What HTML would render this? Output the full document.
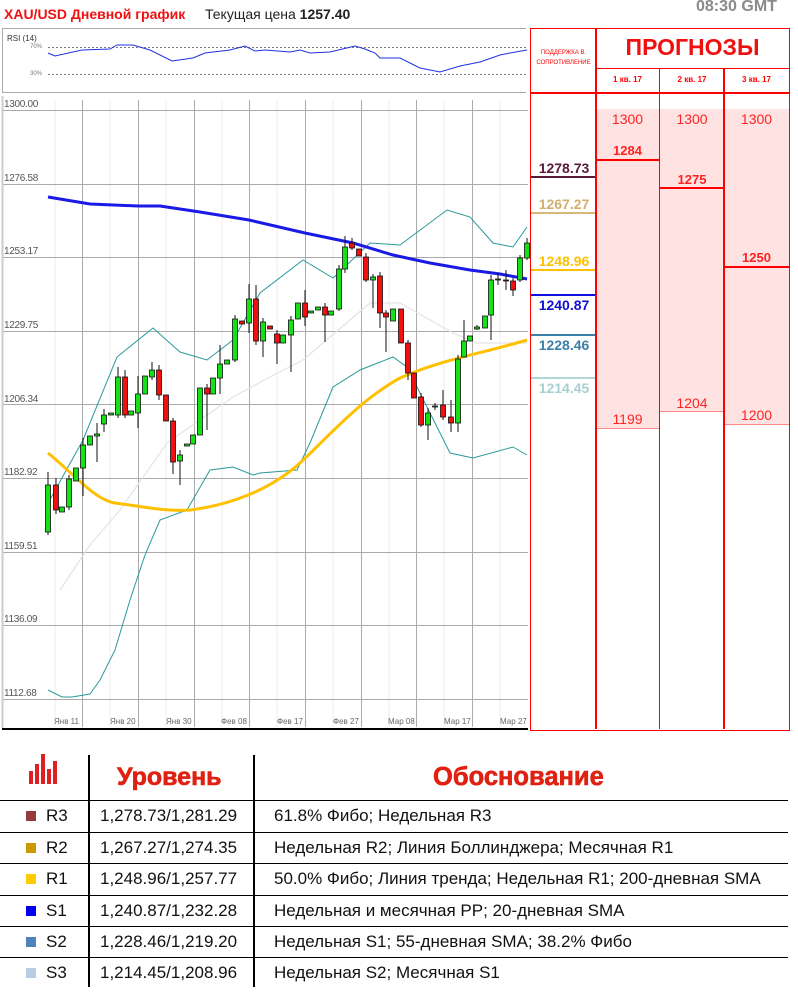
<!DOCTYPE html>
<html><head><meta charset="utf-8"><style>
body{margin:0;width:798px;height:997px;background:#fff;position:relative;overflow:hidden;font-family:"Liberation Sans",Arial,sans-serif}
.a{position:absolute}
.pl{position:absolute;left:4px;font-size:10px;color:#555;letter-spacing:-0.3px}
.dl{position:absolute;top:717px;font-size:8px;color:#666}
.lv{position:absolute;left:533px;width:62px;text-align:center;font-size:14px;font-weight:bold}
.fc{position:absolute;font-size:14px;color:#f22;text-align:center}
.row{position:absolute;left:0;width:788px;height:31px;border-top:1.5px solid #000;font-size:17px;color:#111}
.row span{position:absolute;top:5px}
.sq{position:absolute;left:26px;top:10px;width:10px;height:10px}
</style></head><body>
<div class="a" style="left:4px;top:6px;font-size:14px;font-weight:bold;color:#f01010">XAU/USD Дневной график</div>
<div class="a" style="left:205px;top:6px;font-size:14px;color:#222">Текущая цена <b>1257.40</b></div>
<div class="a" style="left:696px;top:-2px;font-size:16px;font-weight:bold;color:#8a8a8a">08:30 GMT</div>

<div class="a" style="left:2px;top:28px;width:523px;height:63px;border:1px solid #aaa;border-right:none"></div>
<div class="a" style="left:7px;top:34px;font-size:8px;color:#333">RSI (14)</div>
<div class="a" style="left:30px;top:44px;font-size:6px;color:#777">70%</div>
<div class="a" style="left:30px;top:71px;font-size:6px;color:#777">30%</div>
<svg class="a" style="left:0;top:0" width="530" height="95">
<line x1="48" y1="47.5" x2="526" y2="47.5" stroke="#777" stroke-dasharray="2,2"/>
<line x1="48" y1="74.5" x2="526" y2="74.5" stroke="#777" stroke-dasharray="2,2"/>
<polyline fill="none" stroke="#2030e0" stroke-width="1" points="48,53 55,56 82,50 110,49 117,45 133,45 150,50 172,61 193,58 205,53 230,50 245,46 255,51 265,50 290,52 300,50 310,53 330,52 355,46 365,49 375,53 380,58 400,58 420,68 440,72 460,66 480,62 500,55 510,53 527,50"/>
</svg>

<svg class="a" style="left:0;top:96px" width="530" height="640" viewBox="0 96 530 640">
<g stroke="#eee" stroke-width="1">
<line x1="55" y1="100" x2="55" y2="727"/><line x1="110" y1="100" x2="110" y2="727"/><line x1="166" y1="100" x2="166" y2="727"/><line x1="222" y1="100" x2="222" y2="727"/><line x1="277" y1="100" x2="277" y2="727"/><line x1="333" y1="100" x2="333" y2="727"/><line x1="389" y1="100" x2="389" y2="727"/><line x1="444" y1="100" x2="444" y2="727"/><line x1="500" y1="100" x2="500" y2="727"/>
</g>
<g stroke="#aaa" stroke-width="1">
<line x1="82.5" y1="100" x2="82.5" y2="727"/><line x1="138.5" y1="100" x2="138.5" y2="727"/><line x1="194.5" y1="100" x2="194.5" y2="727"/><line x1="249.5" y1="100" x2="249.5" y2="727"/><line x1="305.5" y1="100" x2="305.5" y2="727"/><line x1="361.5" y1="100" x2="361.5" y2="727"/><line x1="416.5" y1="100" x2="416.5" y2="727"/><line x1="472.5" y1="100" x2="472.5" y2="727"/>
<line x1="2" y1="110.5" x2="528" y2="110.5"/><line x1="2" y1="184.5" x2="528" y2="184.5"/><line x1="2" y1="257.5" x2="528" y2="257.5"/><line x1="2" y1="331.5" x2="528" y2="331.5"/><line x1="2" y1="404.5" x2="528" y2="404.5"/><line x1="2" y1="478.5" x2="528" y2="478.5"/><line x1="2" y1="552.5" x2="528" y2="552.5"/><line x1="2" y1="625.5" x2="528" y2="625.5"/><line x1="2" y1="699.5" x2="528" y2="699.5"/>
</g>
<line x1="2.5" y1="96" x2="2.5" y2="728" stroke="#ccc" stroke-width="2"/>
<line x1="2" y1="729" x2="528" y2="729" stroke="#000" stroke-width="2"/>
<polyline fill="none" stroke="#e4e4e4" stroke-width="1.2" points="60,590 90,545 120,510 167,443 200,420 233,397 270,377 303,360 370,303 400,303 453,333 477,343 527,343"/>
<polyline fill="none" stroke="#2a9a9a" stroke-width="1" points="47,505 83,440 117,357 153,328 180,352 207,360 233,340 260,293 303,260 333,278 370,243 400,245 447,210 470,217 493,243 513,247 527,227"/>
<polyline fill="none" stroke="#2a9a9a" stroke-width="1" points="48,690 62,697 72,697 90,694 100,680 115,650 130,600 145,555 160,520 187,510 210,470 233,467 253,475 260,473 297,470 310,443 333,387 360,370 393,357 407,367 450,453 473,458 513,447 527,455"/>
<path fill="none" stroke="#ffc000" stroke-width="3" d="M48,453 C75,475 95,500 115,503 C140,506 165,512 190,510 C230,505 270,490 300,463 C330,435 360,400 400,378 C440,360 480,354 527,340"/>
<polyline fill="none" stroke="#1a1ae6" stroke-width="3" points="48,197 90,204 138,206 160,206 200,212 249,220 305,233 353,243 393,255 430,263 470,270 500,274 527,279"/>
<g stroke="#111" stroke-width="1">
<line x1="48" y1="472" x2="48" y2="535"/><line x1="56" y1="478" x2="56" y2="514"/><line x1="69" y1="475" x2="69" y2="510"/><line x1="83" y1="438" x2="83" y2="496"/><line x1="97" y1="423" x2="97" y2="462"/><line x1="104" y1="409" x2="104" y2="432"/><line x1="118" y1="367" x2="118" y2="418"/><line x1="125" y1="370" x2="125" y2="418"/><line x1="138" y1="376" x2="138" y2="428"/><line x1="152" y1="362" x2="152" y2="380"/><line x1="159" y1="365" x2="159" y2="400"/><line x1="173" y1="418" x2="173" y2="474"/><line x1="180" y1="450" x2="180" y2="485"/><line x1="207" y1="384" x2="207" y2="430"/><line x1="220" y1="345" x2="220" y2="394"/><line x1="235" y1="315" x2="235" y2="362"/><line x1="249" y1="284" x2="249" y2="333"/><line x1="256" y1="285" x2="256" y2="345"/><line x1="263" y1="318" x2="263" y2="357"/><line x1="277" y1="330" x2="277" y2="364"/><line x1="291" y1="316" x2="291" y2="372"/><line x1="305" y1="290" x2="305" y2="326"/><line x1="325" y1="303" x2="325" y2="342"/><line x1="339" y1="265" x2="339" y2="311"/><line x1="345" y1="236" x2="345" y2="273"/><line x1="352" y1="238" x2="352" y2="250"/><line x1="366" y1="253" x2="366" y2="282"/><line x1="373" y1="274" x2="373" y2="308"/><line x1="380" y1="272" x2="380" y2="328"/><line x1="386" y1="310" x2="386" y2="352"/><line x1="408" y1="340" x2="408" y2="380"/><line x1="421" y1="393" x2="421" y2="427"/><line x1="428" y1="408" x2="428" y2="440"/><line x1="435" y1="403" x2="435" y2="410"/><line x1="443" y1="390" x2="443" y2="420"/><line x1="451" y1="400" x2="451" y2="432"/><line x1="458" y1="355" x2="458" y2="432"/><line x1="464" y1="320" x2="464" y2="357"/><line x1="477" y1="325" x2="477" y2="330"/><line x1="491" y1="275" x2="491" y2="340"/><line x1="498" y1="273" x2="498" y2="285"/><line x1="506" y1="270" x2="506" y2="290"/><line x1="513" y1="278" x2="513" y2="296"/><line x1="520" y1="255" x2="520" y2="282"/><line x1="527" y1="238" x2="527" y2="260"/>
</g>
<g stroke="#111" stroke-width="0.8">
<g fill="#16e016">
<rect x="45.5" y="485" width="5" height="47"/><rect x="59.5" y="507" width="5" height="5"/><rect x="66.5" y="479" width="5" height="28"/><rect x="73.5" y="468" width="5" height="13"/><rect x="80.5" y="445" width="5" height="23"/><rect x="87.5" y="436" width="5" height="9"/><rect x="94.5" y="434" width="5" height="2"/><rect x="101.5" y="415" width="5" height="9"/><rect x="108.5" y="413" width="5" height="2"/><rect x="115.5" y="377" width="5" height="38"/><rect x="128.5" y="411" width="5" height="4"/><rect x="135.5" y="394" width="5" height="19"/><rect x="142.5" y="376" width="5" height="18"/><rect x="149.5" y="370" width="5" height="7"/><rect x="177.5" y="455" width="5" height="6"/><rect x="184.5" y="444" width="5" height="2"/><rect x="190.5" y="435" width="5" height="9"/><rect x="197.5" y="388" width="5" height="47"/><rect x="210.5" y="378" width="5" height="16"/><rect x="217.5" y="364" width="5" height="14"/><rect x="224.5" y="360" width="5" height="4"/><rect x="232.5" y="319" width="5" height="41"/><rect x="246.5" y="299" width="5" height="24"/><rect x="260.5" y="322" width="5" height="19"/><rect x="280.5" y="335" width="5" height="8"/><rect x="288.5" y="320" width="5" height="15"/><rect x="295.5" y="303" width="5" height="16"/><rect x="308.5" y="311" width="5" height="2"/><rect x="315.5" y="307" width="5" height="3"/><rect x="328.5" y="311" width="5" height="4"/><rect x="336.5" y="269" width="5" height="40"/><rect x="342.5" y="247" width="5" height="22"/><rect x="370.5" y="277" width="5" height="3"/><rect x="390.5" y="309" width="5" height="12"/><rect x="425.5" y="413" width="5" height="12"/><rect x="432.5" y="406" width="5" height="1"/><rect x="455.5" y="359" width="5" height="64"/><rect x="461.5" y="341" width="5" height="16"/><rect x="467.5" y="336" width="5" height="5"/><rect x="474.5" y="327" width="5" height="2"/><rect x="482.5" y="316" width="5" height="12"/><rect x="488.5" y="280" width="5" height="35"/><rect x="495.5" y="279" width="5" height="1"/><rect x="517.5" y="258" width="5" height="22"/><rect x="524.5" y="243" width="5" height="15"/>
</g>
<g fill="#f01010">
<rect x="53.5" y="485" width="5" height="25"/><rect x="122.5" y="377" width="5" height="38"/><rect x="156.5" y="370" width="5" height="25"/><rect x="163.5" y="395" width="5" height="26"/><rect x="170.5" y="421" width="5" height="41"/><rect x="204.5" y="388" width="5" height="6"/><rect x="239.5" y="321" width="5" height="3"/><rect x="253.5" y="299" width="5" height="42"/><rect x="267.5" y="326" width="5" height="3"/><rect x="274.5" y="334" width="5" height="9"/><rect x="302.5" y="303" width="5" height="14"/><rect x="322.5" y="307" width="5" height="8"/><rect x="349.5" y="243" width="5" height="5"/><rect x="356.5" y="249" width="5" height="7"/><rect x="363.5" y="257" width="5" height="23"/><rect x="377.5" y="276" width="5" height="37"/><rect x="383.5" y="313" width="5" height="4"/><rect x="398.5" y="309" width="5" height="34"/><rect x="405.5" y="343" width="5" height="30"/><rect x="411.5" y="373" width="5" height="25"/><rect x="418.5" y="397" width="5" height="28"/><rect x="440.5" y="405" width="5" height="12"/><rect x="448.5" y="417" width="5" height="6"/><rect x="503.5" y="280" width="5" height="1"/><rect x="510.5" y="281" width="5" height="9"/>
</g></g>
</svg>
<div class="pl" style="top:99px">1300.00</div><div class="pl" style="top:173px">1276.58</div><div class="pl" style="top:246px">1253.17</div><div class="pl" style="top:320px">1229.75</div><div class="pl" style="top:394px">1206.34</div><div class="pl" style="top:467px">1182.92</div><div class="pl" style="top:541px">1159.51</div><div class="pl" style="top:614px">1136.09</div><div class="pl" style="top:688px">1112.68</div>
<div class="dl" style="left:54px">Янв 11</div><div class="dl" style="left:110px">Янв 20</div><div class="dl" style="left:166px">Янв 30</div><div class="dl" style="left:221px">Фев 08</div><div class="dl" style="left:277px">Фев 17</div><div class="dl" style="left:333px">Фев 27</div><div class="dl" style="left:388px">Мар 08</div><div class="dl" style="left:444px">Мар 17</div><div class="dl" style="left:500px">Мар 27</div>

<div class="a" style="left:596px;top:109px;width:63px;height:319px;background:#ffe3e3;border-bottom:1px solid #f88"></div>
<div class="a" style="left:659px;top:109px;width:65px;height:302px;background:#ffe3e3;border-bottom:1px solid #f88;border-left:1px solid #f88"></div>
<div class="a" style="left:724px;top:109px;width:65px;height:315px;background:#ffe3e3;border-bottom:1px solid #f88"></div>
<div class="a" style="left:530px;top:28px;width:258px;height:701px;border:1.5px solid #f00"></div>
<div class="a" style="left:595px;top:28px;width:1.5px;height:701px;background:#f00"></div>
<div class="a" style="left:659px;top:69px;width:1px;height:660px;background:#f00"></div>
<div class="a" style="left:723px;top:69px;width:1.5px;height:660px;background:#f00"></div>
<div class="a" style="left:596px;top:68px;width:193px;height:1px;background:#f00"></div>
<div class="a" style="left:530px;top:92px;width:259px;height:1.5px;background:#f00"></div>
<div class="a" style="left:532px;top:48px;width:63px;text-align:center;font-size:6px;line-height:10px;color:#f00">ПОДДЕРЖКА В.<br>СОПРОТИВЛЕНИЕ</div>
<div class="a" style="left:596px;top:34px;width:193px;text-align:center;font-size:23px;font-weight:bold;color:#f01010">ПРОГНОЗЫ</div>
<div class="a" style="left:596px;top:75px;width:63px;text-align:center;font-size:8px;font-weight:bold;color:#f00">1 кв. 17</div>
<div class="a" style="left:660px;top:75px;width:64px;text-align:center;font-size:8px;font-weight:bold;color:#f00">2 кв. 17</div>
<div class="a" style="left:724px;top:75px;width:65px;text-align:center;font-size:8px;font-weight:bold;color:#f00">3 кв. 17</div>
<div class="fc" style="left:596px;top:111px;width:63px">1300</div><div class="fc" style="left:660px;top:111px;width:64px">1300</div><div class="fc" style="left:724px;top:111px;width:65px">1300</div>
<div class="fc" style="left:596px;top:143px;width:63px;font-weight:bold;font-size:13px">1284</div>
<div class="a" style="left:596px;top:159px;width:63px;height:2px;background:#f00"></div>
<div class="fc" style="left:660px;top:172px;width:64px;font-weight:bold;font-size:13px">1275</div>
<div class="a" style="left:660px;top:187px;width:64px;height:2px;background:#f00"></div>
<div class="fc" style="left:724px;top:250px;width:65px;font-weight:bold;font-size:13px">1250</div>
<div class="a" style="left:724px;top:266px;width:65px;height:2px;background:#f00"></div>
<div class="fc" style="left:596px;top:411px;width:63px">1199</div><div class="fc" style="left:660px;top:395px;width:64px">1204</div><div class="fc" style="left:724px;top:407px;width:65px">1200</div>

<div class="lv" style="top:160px;color:#5a1838">1278.73</div><div class="a" style="left:531px;top:176px;width:64px;height:2px;background:#5a1838"></div>
<div class="lv" style="top:196px;color:#d0b070">1267.27</div><div class="a" style="left:531px;top:212px;width:64px;height:2px;background:#d8b878"></div>
<div class="lv" style="top:253px;color:#ffc000">1248.96</div><div class="a" style="left:531px;top:269px;width:64px;height:2px;background:#ffc000"></div>
<div class="a" style="left:531px;top:294px;width:64px;height:2px;background:#1010e0"></div><div class="lv" style="top:297px;color:#1010d0">1240.87</div>
<div class="a" style="left:531px;top:334px;width:64px;height:2px;background:#3d7fa8"></div><div class="lv" style="top:337px;color:#3d7fa8">1228.46</div>
<div class="a" style="left:531px;top:377px;width:64px;height:2px;background:#b0d8d8"></div><div class="lv" style="top:380px;color:#a8d0d0">1214.45</div>

<svg class="a" style="left:28px;top:754px" width="32" height="32"><g fill="#e02020"><rect x="1" y="17" width="4" height="13"/><rect x="7" y="10" width="4" height="20"/><rect x="13" y="0" width="4" height="30"/><rect x="19" y="15" width="4" height="15"/><rect x="25" y="7" width="4" height="23"/></g></svg>
<div class="a" style="left:117px;top:763px;font-size:25px;font-weight:900;color:#e02010;-webkit-text-stroke:0.6px #e02010">Уровень</div>
<div class="a" style="left:433px;top:763px;font-size:25.5px;font-weight:900;color:#e02010;-webkit-text-stroke:0.6px #e02010">Обоснование</div>
<div class="a" style="left:88px;top:755px;width:1.5px;height:232px;background:#000"></div>
<div class="a" style="left:253px;top:755px;width:1.5px;height:232px;background:#000"></div>
<div class="row" style="top:800px"><div class="sq" style="background:#943c3c"></div><span style="left:46px">R3</span><span style="left:100px">1,278.73/1,281.29</span><span style="left:274px">61.8% Фибо; Недельная R3</span></div>
<div class="row" style="top:832px"><div class="sq" style="background:#cc9a00"></div><span style="left:46px">R2</span><span style="left:100px">1,267.27/1,274.35</span><span style="left:274px">Недельная R2; Линия Боллинджера; Месячная R1</span></div>
<div class="row" style="top:863px"><div class="sq" style="background:#ffcc00"></div><span style="left:46px">R1</span><span style="left:100px">1,248.96/1,257.77</span><span style="left:274px">50.0% Фибо; Линия тренда; Недельная R1; 200-дневная SMA</span></div>
<div class="row" style="top:895px"><div class="sq" style="background:#0000ee"></div><span style="left:46px">S1</span><span style="left:100px">1,240.87/1,232.28</span><span style="left:274px">Недельная и месячная PP; 20-дневная SMA</span></div>
<div class="row" style="top:926px"><div class="sq" style="background:#4f81bd"></div><span style="left:46px">S2</span><span style="left:100px">1,228.46/1,219.20</span><span style="left:274px">Недельная S1; 55-дневная SMA; 38.2% Фибо</span></div>
<div class="row" style="top:957px"><div class="sq" style="background:#b8cce4"></div><span style="left:46px">S3</span><span style="left:100px">1,214.45/1,208.96</span><span style="left:274px">Недельная S2; Месячная S1</span></div>
</body></html>
